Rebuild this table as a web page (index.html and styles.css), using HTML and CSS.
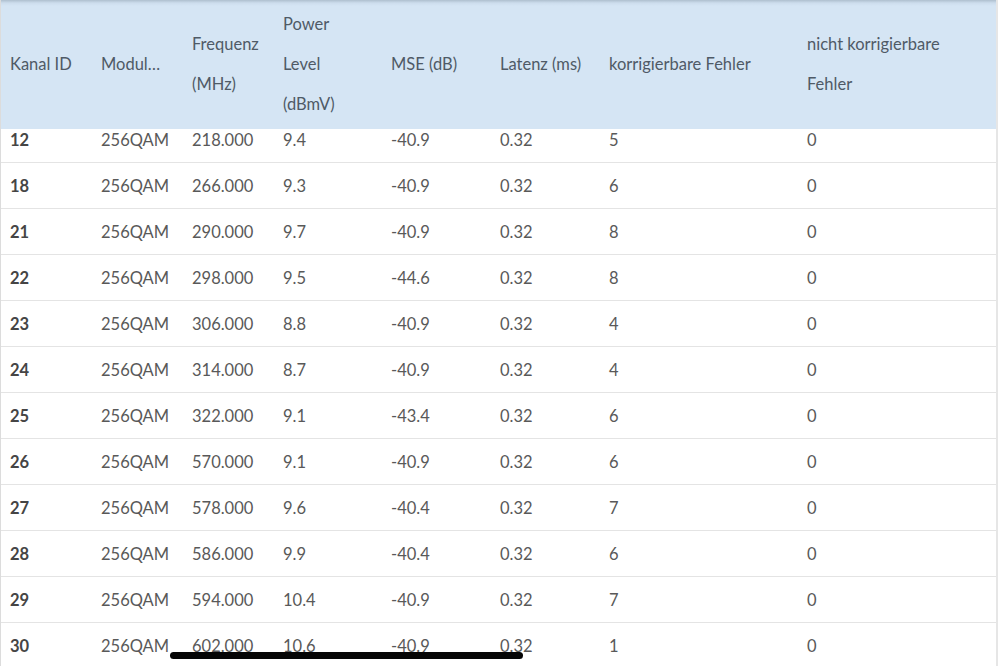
FILE: index.html
```html
<!DOCTYPE html>
<html lang="de">
<head>
<meta charset="utf-8">
<title>Downstream Kanäle</title>
<link rel="stylesheet" href="styles.css">
</head>
<body>
<div class="frame">
  <table class="grid head">
    <colgroup>
      <col class="c1"><col class="c2"><col class="c3"><col class="c4"><col class="c5"><col class="c6"><col class="c7"><col>
    </colgroup>
    <thead>
      <tr>
        <th>Kanal ID</th>
        <th>Modul…</th>
        <th>Frequenz<br>(MHz)</th>
        <th>Power<br>Level<br>(dBmV)</th>
        <th>MSE (dB)</th>
        <th>Latenz (ms)</th>
        <th>korrigierbare Fehler</th>
        <th>nicht korrigierbare<br>Fehler</th>
      </tr>
    </thead>
  </table>
  <div class="scroller">
    <table class="grid body">
      <colgroup>
        <col class="c1"><col class="c2"><col class="c3"><col class="c4"><col class="c5"><col class="c6"><col class="c7"><col>
      </colgroup>
      <tbody>
        <tr><td>12</td><td>256QAM</td><td>218.000</td><td>9.4</td><td>-40.9</td><td>0.32</td><td>5</td><td>0</td></tr>
        <tr><td>18</td><td>256QAM</td><td>266.000</td><td>9.3</td><td>-40.9</td><td>0.32</td><td>6</td><td>0</td></tr>
        <tr><td>21</td><td>256QAM</td><td>290.000</td><td>9.7</td><td>-40.9</td><td>0.32</td><td>8</td><td>0</td></tr>
        <tr><td>22</td><td>256QAM</td><td>298.000</td><td>9.5</td><td>-44.6</td><td>0.32</td><td>8</td><td>0</td></tr>
        <tr><td>23</td><td>256QAM</td><td>306.000</td><td>8.8</td><td>-40.9</td><td>0.32</td><td>4</td><td>0</td></tr>
        <tr><td>24</td><td>256QAM</td><td>314.000</td><td>8.7</td><td>-40.9</td><td>0.32</td><td>4</td><td>0</td></tr>
        <tr><td>25</td><td>256QAM</td><td>322.000</td><td>9.1</td><td>-43.4</td><td>0.32</td><td>6</td><td>0</td></tr>
        <tr><td>26</td><td>256QAM</td><td>570.000</td><td>9.1</td><td>-40.9</td><td>0.32</td><td>6</td><td>0</td></tr>
        <tr><td>27</td><td>256QAM</td><td>578.000</td><td>9.6</td><td>-40.4</td><td>0.32</td><td>7</td><td>0</td></tr>
        <tr><td>28</td><td>256QAM</td><td>586.000</td><td>9.9</td><td>-40.4</td><td>0.32</td><td>6</td><td>0</td></tr>
        <tr><td>29</td><td>256QAM</td><td>594.000</td><td>10.4</td><td>-40.9</td><td>0.32</td><td>7</td><td>0</td></tr>
        <tr><td>30</td><td>256QAM</td><td>602.000</td><td>10.6</td><td>-40.9</td><td>0.32</td><td>1</td><td>0</td></tr>
      </tbody>
    </table>
  </div>
  <div class="home-indicator"></div>
</div>
</body>
</html>
```
FILE: styles.css
```css
html, body {
  margin: 0;
  padding: 0;
  background: #ffffff;
}
body {
  font-family: Lato, "Open Sans", sans-serif;
  font-size: 16.5px;
  overflow: hidden;
}
.frame {
  position: relative;
  width: 998px;
  height: 666px;
  overflow: hidden;
  box-sizing: border-box;
  border-left: 1px solid #dcdcdc;
  border-right: 2px solid #e6e6e6;
}
.grid {
  width: 100%;
  border-collapse: collapse;
  table-layout: fixed;
}
.c1 { width: 91px; }
.c2 { width: 91px; }
.c3 { width: 91px; }
.c4 { width: 108px; }
.c5 { width: 109px; }
.c6 { width: 109px; }
.c7 { width: 198px; }
.head {
  background: linear-gradient(#aebfce 0, #cddded 3px, #d5e5f4 6px, #d5e5f4 100%);
}
.head th {
  padding: 4px 0 5px 9px;
  text-align: left;
  vertical-align: middle;
  font-weight: 400;
  line-height: 40px;
  color: #4f5a66;
  white-space: nowrap;
}
.scroller {
  height: 537px;
  overflow: hidden;
}
.body {
  margin-top: -12px;
}
.body td {
  height: 45px;
  padding: 0 0 0 9px;
  border-bottom: 1px solid #e4e4e4;
  color: #595959;
  line-height: 20px;
  vertical-align: middle;
}
.body td:first-child {
  font-weight: 700;
  color: #454545;
}
.home-indicator {
  position: absolute;
  left: 169px;
  top: 652px;
  width: 353px;
  height: 7px;
  border-radius: 4px;
  background: #050505;
}
```
